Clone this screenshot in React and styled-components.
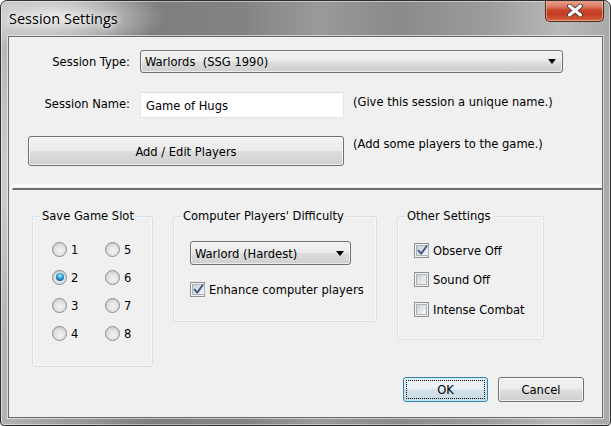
import React from "react";
import styled, { createGlobalStyle } from "styled-components";

const Global = createGlobalStyle`
  html, body { margin: 0; padding: 0; background: #ffffff; }
  * { box-sizing: border-box; }
`;

const UI_FONT = `"DejaVu Sans Condensed", "DejaVu Sans", Tahoma, sans-serif`;

const Window = styled.div`
  position: relative;
  width: 611px;
  height: 426px;
  display: flex;
  flex-direction: column;
  border: 1px solid #2f2f2f;
  border-radius: 7px 7px 4px 4px;
  padding: 0 7px 7px 7px;
  background:
    radial-gradient(ellipse 110px 34px at 55px 16px, rgba(255,255,255,0.75), rgba(255,255,255,0) 100%),
    radial-gradient(ellipse 70px 160px at 0px 180px, rgba(255,255,255,0.35), rgba(255,255,255,0) 100%),
    linear-gradient(90deg, #b4b4b4 0%, #9a9a9a 12%, #7e7e7e 25%, #838383 40%, #9a9a9a 52%, #8a8a8a 65%, #9c9c9c 80%, #b9b9b9 92%, #a9a9a9 100%);
  box-shadow: inset 0 0 0 1px rgba(255,255,255,0.45);
  overflow: hidden;
`;

const TitleBar = styled.div`
  height: 35px;
  display: flex;
  align-items: center;
  padding-left: 1px;
  padding-bottom: 1px;
`;

const Title = styled.span`
  font-family: "Open Sans", "Noto Sans", sans-serif;
  font-size: 14.5px;
  color: #000;
  text-shadow: 0 0 6px rgba(255,255,255,0.95), 0 0 10px rgba(255,255,255,0.8);
`;

const CloseButton = styled.div`
  position: absolute;
  top: -1px;
  right: 6px;
  width: 59px;
  height: 22px;
  border: 1px solid #4d2a22;
  border-top: none;
  border-radius: 0 0 5px 5px;
  background: linear-gradient(180deg, #e9a997 0%, #dc7c64 30%, #c8432a 50%, #c23d22 70%, #d4643f 100%);
  box-shadow: inset 0 0 0 1px rgba(255,210,190,0.55);
  display: flex;
  align-items: center;
  justify-content: center;
`;

const Client = styled.div`
  flex: 1;
  display: flex;
  flex-direction: column;
  background: #f0f0f0;
  border: 1px solid #6a6a6a;
  box-shadow: 0 0 0 1px rgba(255,255,255,0.55);
  font-family: ${UI_FONT};
  font-size: 12.8px;
  color: #000;
`;

const TopGrid = styled.div`
  display: grid;
  grid-template-columns: 102px 204px 209px;
  grid-template-rows: 23px 27px 30px;
  column-gap: 10px;
  row-gap: 18px;
  padding: 13px 0 0 19px;
`;

const Label = styled.label`
  justify-self: end;
  align-self: center;
  white-space: nowrap;
  margin-right: 0px;
  margin-top: ${(p) => p.$offset || 0}px;
`;

const Hint = styled.span`
  align-self: start;
  white-space: nowrap;
  margin-left: -1px;
  margin-top: ${(p) => p.$offset || 0}px;
`;

const Combo = styled.div`
  grid-column: ${(p) => p.$span || "auto"};
  width: ${(p) => p.$width || "auto"};
  height: ${(p) => p.$height || 23}px;
  display: flex;
  align-items: center;
  justify-content: space-between;
  padding: 0 6px 0 4px;
  border: 1px solid #707070;
  border-radius: 3px;
  background: linear-gradient(180deg, #f2f2f2 0%, #ebebeb 48%, #dddddd 52%, #cfcfcf 100%);
  box-shadow: inset 0 0 0 1px rgba(255,255,255,0.6);
  white-space: nowrap;
`;

const Arrow = styled.span`
  width: 0;
  height: 0;
  border-left: 4.5px solid transparent;
  border-right: 4.5px solid transparent;
  border-top: 5px solid #000;
`;

const TextBox = styled.div`
  display: flex;
  align-items: center;
  padding-left: 5px;
  background: #fff;
  border: 1px solid #e2e5ea;
  border-top-color: #d9dde3;
  border-radius: 1px;
  margin-top: 1px;
`;

const PushButton = styled.div`
  grid-column: ${(p) => p.$span || "auto"};
  width: ${(p) => p.$width || "auto"};
  height: ${(p) => p.$height || 25}px;
  display: flex;
  align-items: center;
  justify-content: center;
  position: relative;
  border: 1px solid ${(p) => (p.$focused ? "#3c7fb1" : "#707070")};
  border-radius: 3px;
  background: ${(p) =>
    p.$focused
      ? "linear-gradient(180deg, #f0f6f9 0%, #e7f0f4 48%, #d3e2ea 52%, #c8dbe4 100%)"
      : "linear-gradient(180deg, #f2f2f2 0%, #ebebeb 48%, #dddddd 52%, #cfcfcf 100%)"};
  box-shadow: inset 0 0 0 1px ${(p) => (p.$focused ? "rgba(180,235,250,0.8)" : "rgba(255,255,255,0.7)")};
  white-space: nowrap;

  &::after {
    content: "";
    display: ${(p) => (p.$focused ? "block" : "none")};
    position: absolute;
    inset: 2px;
    border: 1px dotted #000;
  }
`;

const Separator = styled.div`
  margin: 18px 0 0 3px;
  height: 6px;
  border-top: 3px solid #fbfbfb;
  border-left: 1px solid #fbfbfb;
  border-bottom: 2px solid #6f6f6f;
`;

const GroupRow = styled.div`
  display: flex;
  align-items: flex-start;
  gap: 20px;
  margin-top: 26px;
  padding-left: 23px;
`;

const Group = styled.section`
  position: relative;
  width: ${(p) => p.$width}px;
  height: ${(p) => p.$height}px;
  padding: ${(p) => p.$padTop}px 0 0 ${(p) => p.$padLeft}px;
  border: 1px solid #d5dfe5;
  border-radius: 3px;
  box-shadow: inset 0 0 0 1px rgba(255,255,255,0.6);
`;

const Caption = styled.span`
  position: absolute;
  top: -9px;
  left: 7px;
  padding: 0 2px;
  line-height: 16px;
  background: #f0f0f0;
  white-space: nowrap;
`;

const RadioGrid = styled.div`
  display: grid;
  grid-template-columns: 53px 53px;
  grid-template-rows: repeat(4, 16px);
  grid-auto-flow: column;
  row-gap: 12px;
`;

const OptionRow = styled.div`
  display: flex;
  align-items: center;
  gap: 4px;
  height: 16px;
  white-space: nowrap;
`;

const RadioCircle = styled.span`
  position: relative;
  width: 15px;
  height: 15px;
  border-radius: 50%;
  border: 1px solid #8a8c8e;
  background: radial-gradient(circle at 55% 60%, #f4f4f4 0%, #e2e2e2 45%, #cfcfcf 75%, #f0f0f0 100%);
  flex: none;

  &::after {
    content: "";
    display: ${(p) => (p.$checked ? "block" : "none")};
    position: absolute;
    left: 2.5px;
    top: 2.5px;
    width: 8px;
    height: 8px;
    border-radius: 50%;
    background: radial-gradient(circle at 50% 35%, #b9f1ff 0%, #3bb1e6 35%, #1a6aa3 70%, #0b3658 100%);
  }
`;

const CheckList = styled.div`
  display: flex;
  flex-direction: column;
  gap: ${(p) => p.$gap || 13.5}px;
  padding-top: ${(p) => p.$top || 0}px;
`;

const CheckBoxBox = styled.span`
  width: 15px;
  height: 15px;
  border: 1px solid #8e8f8f;
  background: #f4f4f4;
  padding: 1px;
  flex: none;
  display: flex;

  & > span {
    flex: 1;
    display: flex;
    align-items: center;
    justify-content: center;
    background: linear-gradient(135deg, #cbcfd5 0%, #dfe1e4 45%, #f6f6f6 100%);
    border: 1px solid #aeb3b9;
  }
`;

const ButtonRow = styled.div`
  display: flex;
  justify-content: flex-end;
  gap: 10px;
  margin-top: 10px;
  padding-right: 18px;
`;

function Check({ checked }) {
  return (
    <CheckBoxBox>
      <span>
        {checked && (
          <svg width="11" height="11" viewBox="0 0 11 11">
            <path d="M1.6 5.6 L4.2 8.6 L9.6 1.2" fill="none" stroke="#3f5687" strokeWidth="1.9" strokeLinecap="round" strokeLinejoin="round" />
          </svg>
        )}
      </span>
    </CheckBoxBox>
  );
}

function Radio({ label, checked }) {
  return (
    <OptionRow>
      <RadioCircle $checked={checked} />
      <span>{label}</span>
    </OptionRow>
  );
}

function CheckOption({ label, checked }) {
  return (
    <OptionRow>
      <Check checked={checked} />
      <span>{label}</span>
    </OptionRow>
  );
}

export default function App() {
  return (
    <>
      <Global />
      <Window>
        <TitleBar>
          <Title>Session Settings</Title>
        </TitleBar>
        <CloseButton>
          <svg width="18" height="13" viewBox="0 0 18 13">
            <path d="M3.5 2 L14.5 11 M14.5 2 L3.5 11" stroke="#3b3b3b" strokeWidth="4.8" strokeLinecap="round" />
            <path d="M3.5 2 L14.5 11 M14.5 2 L3.5 11" stroke="#ffffff" strokeWidth="3" strokeLinecap="round" />
          </svg>
        </CloseButton>
        <Client>
          <TopGrid>
            <Label>Session Type:</Label>
            <Combo $span="2 / span 2">
              <span>Warlords&nbsp;&nbsp;(SSG 1990)</span>
              <Arrow />
            </Combo>
            <Label $offset={-2}>Session Name:</Label>
            <TextBox>Game of Hugs</TextBox>
            <Hint $offset={3}>(Give this session a unique name.)</Hint>
            <PushButton $span="1 / span 2" $height={30}>Add / Edit Players</PushButton>
            <Hint>(Add some players to the game.)</Hint>
          </TopGrid>
          <Separator />
          <GroupRow>
            <Group $width={121} $height={151} $padTop={24} $padLeft={19}>
              <Caption>Save Game Slot</Caption>
              <RadioGrid>
                <Radio label="1" />
                <Radio label="2" checked />
                <Radio label="3" />
                <Radio label="4" />
                <Radio label="5" />
                <Radio label="6" />
                <Radio label="7" />
                <Radio label="8" />
              </RadioGrid>
            </Group>
            <Group $width={204} $height={106} $padTop={24} $padLeft={16}>
              <Caption>Computer Players' Difficulty</Caption>
              <Combo $width="161px" $height={24}>
                <span>Warlord (Hardest)</span>
                <Arrow />
              </Combo>
              <CheckList $top={16}>
                <CheckOption label="Enhance computer players" checked />
              </CheckList>
            </Group>
            <Group $width={147} $height={124} $padTop={25} $padLeft={16}>
              <Caption>Other Settings</Caption>
              <CheckList>
                <CheckOption label="Observe Off" checked />
                <CheckOption label="Sound Off" />
                <CheckOption label="Intense Combat" />
              </CheckList>
            </Group>
          </GroupRow>
          <ButtonRow>
            <PushButton $width="85px" $focused>OK</PushButton>
            <PushButton $width="86px">Cancel</PushButton>
          </ButtonRow>
        </Client>
      </Window>
    </>
  );
}
